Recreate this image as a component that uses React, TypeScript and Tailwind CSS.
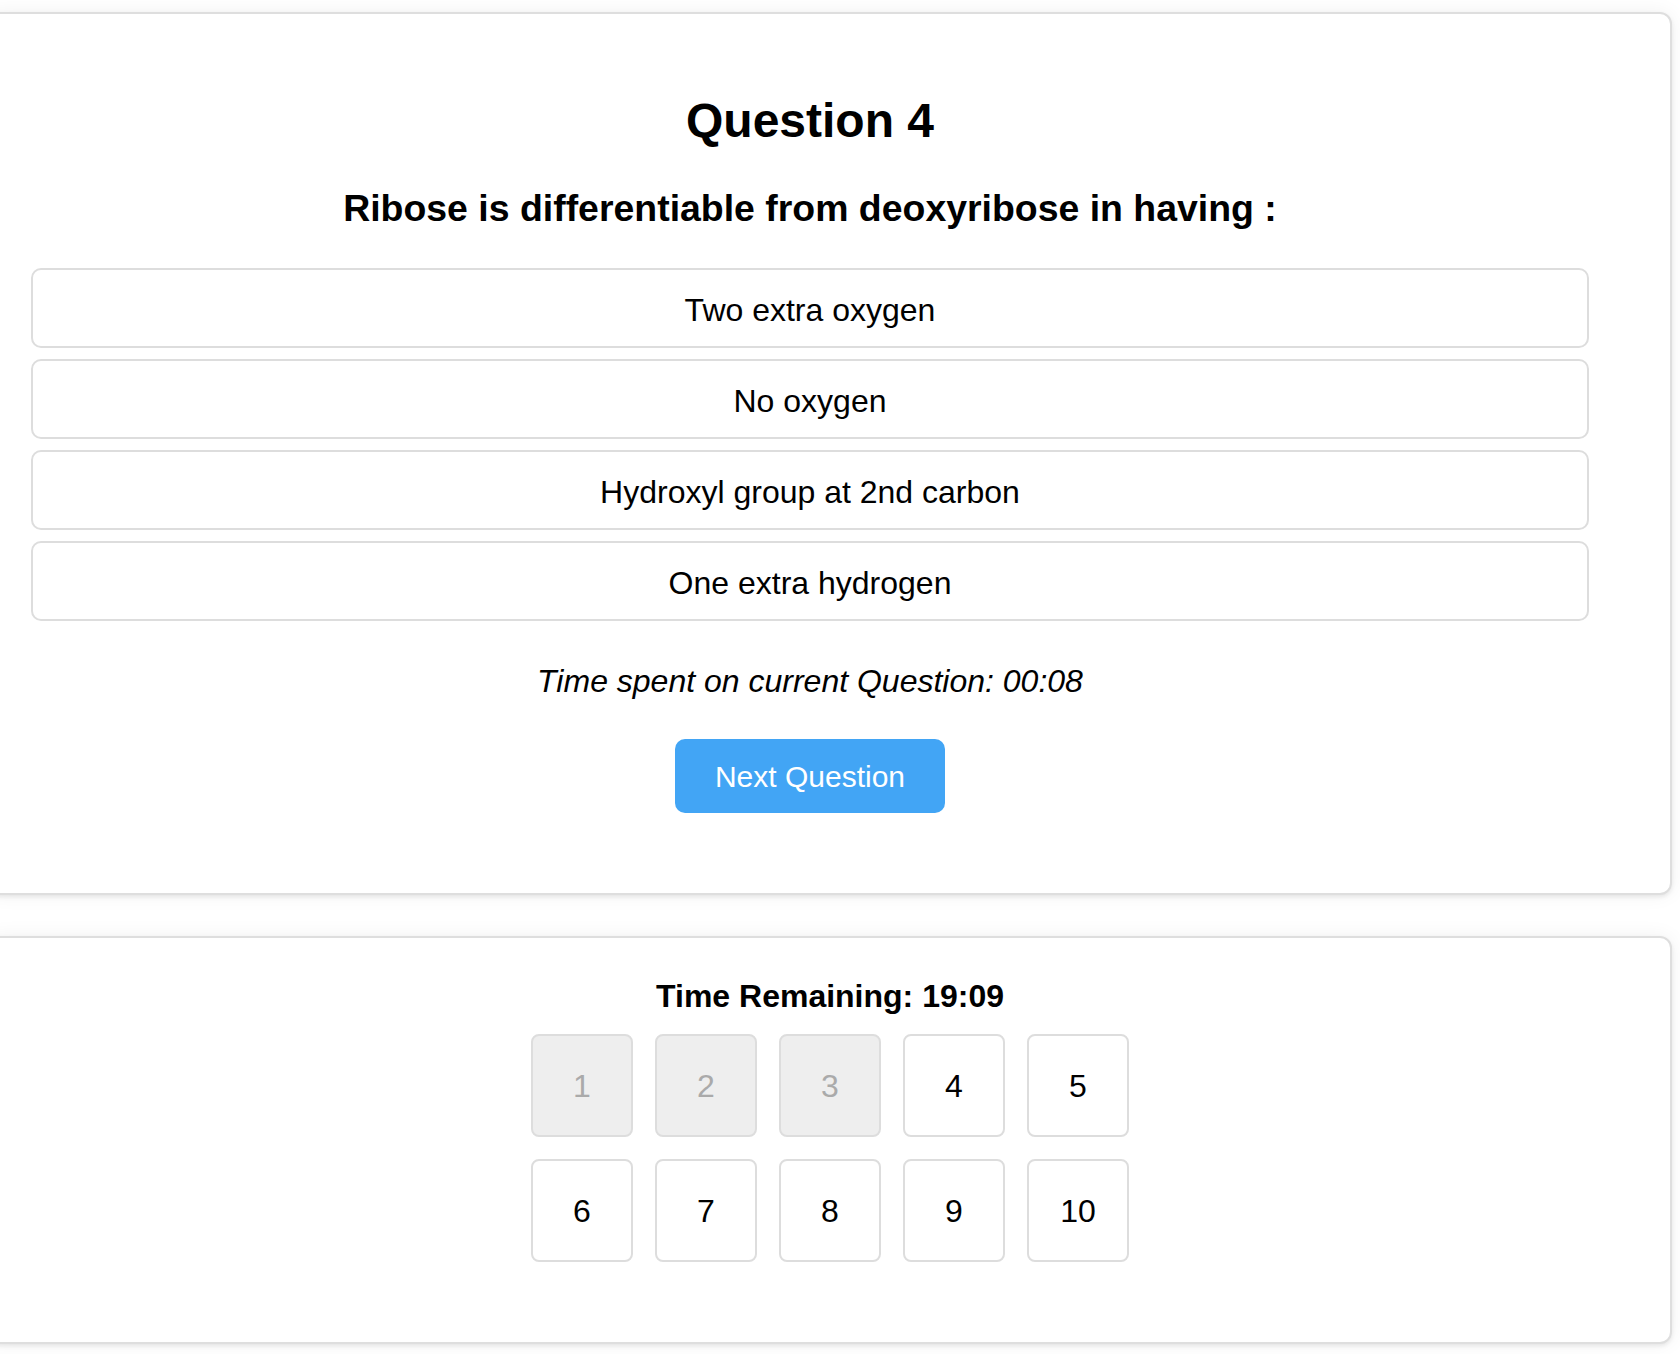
import React from "react";

const options = [
  "Two extra oxygen",
  "No oxygen",
  "Hydroxyl group at 2nd carbon",
  "One extra hydrogen",
];

export default function App() {
  const nums = [1, 2, 3, 4, 5, 6, 7, 8, 9, 10];
  return (
    <div
      className="w-[1680px] h-[1354px] overflow-hidden bg-white text-black"
      style={{ fontFamily: '"Liberation Sans", Arial, Helvetica, sans-serif' }}
    >
      <div className="pt-[12px]">
        <div className="box-border -ml-[12px] w-[1684px] h-[883px] rounded-[12px] border-2 border-[#dedede] bg-white shadow-[0_2px_4px_rgba(0,0,0,0.08),0_0_20px_rgba(0,0,0,0.06)] pt-[79px] pl-[41px] pr-[81px]">
          <h1 className="text-center text-[48px] font-bold leading-[55px]">Question 4</h1>
          <h3 className="mt-[39px] text-center text-[37.44px] font-bold leading-[43px]">
            Ribose is differentiable from deoxyribose in having :
          </h3>
          <div className="mt-[38px] flex flex-col gap-[11px]">
            {options.map((o) => (
              <div
                key={o}
                className="box-border h-[80px] rounded-[10px] border-2 border-[#dddddd] bg-white flex items-center justify-center pt-[3px] text-[32px]"
              >
                {o}
              </div>
            ))}
          </div>
          <p className="mt-[42px] text-center text-[32px] italic leading-[37px]">
            Time spent on current Question: 00:08
          </p>
          <div className="mt-[39px] flex justify-center">
            <button className="w-[270px] h-[74px] rounded-[10px] bg-[#42a5f5] text-white text-[30px]">
              Next Question
            </button>
          </div>
        </div>
        <div className="box-border mt-[41px] -ml-[12px] w-[1684px] h-[408px] rounded-[12px] border-2 border-[#dedede] bg-white shadow-[0_2px_4px_rgba(0,0,0,0.08),0_0_20px_rgba(0,0,0,0.06)] pt-[40px]">
          <p className="text-center text-[32px] font-bold leading-[37px]">Time Remaining: 19:09</p>
          <div className="mt-[19px] flex justify-center">
            <div className="grid grid-cols-[repeat(5,102px)] gap-[22px]">
              {nums.map((n) => (
                <div
                  key={n}
                  className={
                    n <= 3
                      ? "box-border w-[102px] h-[103px] rounded-[8px] border-2 border-[#dddddd] bg-[#eeeeee] text-[#aaaaaa] flex items-center justify-center text-[32px]"
                      : "box-border w-[102px] h-[103px] rounded-[8px] border-2 border-[#dddddd] bg-white text-black flex items-center justify-center text-[32px]"
                  }
                >
                  {n}
                </div>
              ))}
            </div>
          </div>
        </div>
      </div>
    </div>
  );
}
